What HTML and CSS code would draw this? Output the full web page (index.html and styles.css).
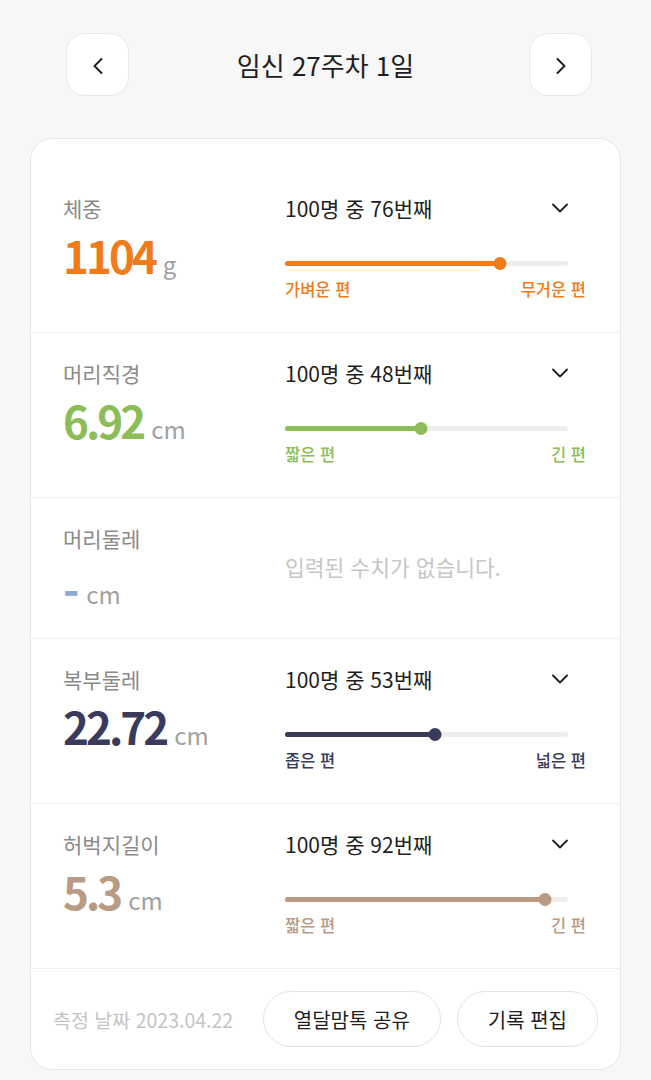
FILE: index.html
```html
<!DOCTYPE html>
<html lang="ko">
<head>
<meta charset="utf-8">
<title>임신 27주차 1일</title>
<link rel="stylesheet" href="styles.css">
</head>
<body>
<div class="page">
  <header class="nav">
    <button class="nav-btn" aria-label="이전">
      <svg width="12" height="16" viewBox="0 0 12 16"><polyline points="9.5,1 2.5,8 9.5,15" fill="none" stroke="#1e1e1e" stroke-width="1.9" stroke-linecap="round" stroke-linejoin="round"/></svg>
    </button>
    <h1 class="title">임신 27주차 1일</h1>
    <button class="nav-btn" aria-label="다음">
      <svg width="12" height="16" viewBox="0 0 12 16"><polyline points="2.5,1 9.5,8 2.5,15" fill="none" stroke="#1e1e1e" stroke-width="1.9" stroke-linecap="round" stroke-linejoin="round"/></svg>
    </button>
  </header>

  <section class="card">
    <div class="row">
      <div class="metric">
        <div class="label">체중</div>
        <div class="value"><span class="num c-orange">1104</span><span class="unit">g</span></div>
      </div>
      <div class="rank">
        <div class="rank-head"><span>100명 중 76번째</span>
          <svg class="chev" width="16" height="10" viewBox="0 0 16 10"><polyline points="1,1.5 8,8.5 15,1.5" fill="none" stroke="#1e1e1e" stroke-width="1.8" stroke-linecap="round" stroke-linejoin="round"/></svg>
        </div>
        <div class="slider"><div class="track"></div><div class="fill bg-orange" style="width:76%"></div><div class="dot bg-orange" style="left:76%"></div></div>
        <div class="ends c-orange"><span>가벼운 편</span><span>무거운 편</span></div>
      </div>
    </div>

    <div class="row">
      <div class="metric">
        <div class="label">머리직경</div>
        <div class="value"><span class="num c-green">6.92</span><span class="unit">cm</span></div>
      </div>
      <div class="rank">
        <div class="rank-head"><span>100명 중 48번째</span>
          <svg class="chev" width="16" height="10" viewBox="0 0 16 10"><polyline points="1,1.5 8,8.5 15,1.5" fill="none" stroke="#1e1e1e" stroke-width="1.8" stroke-linecap="round" stroke-linejoin="round"/></svg>
        </div>
        <div class="slider"><div class="track"></div><div class="fill bg-green" style="width:48%"></div><div class="dot bg-green" style="left:48%"></div></div>
        <div class="ends c-green"><span>짧은 편</span><span>긴 편</span></div>
      </div>
    </div>

    <div class="row">
      <div class="metric">
        <div class="label">머리둘레</div>
        <div class="value"><span class="num dash c-blue">-</span><span class="unit">cm</span></div>
      </div>
      <div class="empty">입력된 수치가 없습니다.</div>
    </div>

    <div class="row">
      <div class="metric">
        <div class="label">복부둘레</div>
        <div class="value"><span class="num c-navy">22.72</span><span class="unit">cm</span></div>
      </div>
      <div class="rank">
        <div class="rank-head"><span>100명 중 53번째</span>
          <svg class="chev" width="16" height="10" viewBox="0 0 16 10"><polyline points="1,1.5 8,8.5 15,1.5" fill="none" stroke="#1e1e1e" stroke-width="1.8" stroke-linecap="round" stroke-linejoin="round"/></svg>
        </div>
        <div class="slider"><div class="track"></div><div class="fill bg-navy" style="width:53%"></div><div class="dot bg-navy" style="left:53%"></div></div>
        <div class="ends c-navy"><span>좁은 편</span><span>넓은 편</span></div>
      </div>
    </div>

    <div class="row">
      <div class="metric">
        <div class="label">허벅지길이</div>
        <div class="value"><span class="num c-brown">5.3</span><span class="unit">cm</span></div>
      </div>
      <div class="rank">
        <div class="rank-head"><span>100명 중 92번째</span>
          <svg class="chev" width="16" height="10" viewBox="0 0 16 10"><polyline points="1,1.5 8,8.5 15,1.5" fill="none" stroke="#1e1e1e" stroke-width="1.8" stroke-linecap="round" stroke-linejoin="round"/></svg>
        </div>
        <div class="slider"><div class="track"></div><div class="fill bg-brown" style="width:92%"></div><div class="dot bg-brown" style="left:92%"></div></div>
        <div class="ends c-brown"><span>짧은 편</span><span>긴 편</span></div>
      </div>
    </div>

    <footer class="foot">
      <span class="date">측정 날짜 2023.04.22</span>
      <div class="actions">
        <button class="pill">열달맘톡 공유</button>
        <button class="pill">기록 편집</button>
      </div>
    </footer>
  </section>
</div>
</body>
</html>
```

FILE: styles.css
```css
* { box-sizing: border-box; }

html, body {
  margin: 0;
  padding: 0;
  background: #f7f7f7;
  font-family: "Noto Sans CJK KR", "Noto Sans", sans-serif;
  color: #222;
}

.page {
  width: 651px;
  height: 1080px;
  overflow: hidden;
}

.nav {
  display: grid;
  grid-template-columns: 63px 1fr 63px;
  align-items: center;
  padding: 33px 59px 0 66px;
  margin-bottom: 42px;
}

.nav-btn {
  width: 63px;
  height: 63px;
  border: 1px solid #e9e9e9;
  border-radius: 19px;
  background: #fff;
  display: flex;
  align-items: center;
  justify-content: center;
  padding: 2px 0 0;
  margin: 0;
}

.nav-btn svg { display: block; }

.title {
  margin: 0;
  padding-right: 7px;
  text-align: center;
  font-size: 26px;
  font-weight: 400;
  line-height: 38px;
  color: #1e1e1e;
}

.card {
  margin: 0 30px;
  background: #fff;
  border: 1px solid #e6e6e6;
  border-radius: 22px;
  padding-top: 29px;
}

.row {
  display: flex;
  padding: 26px 34px 31px 32px;
  border-bottom: 1px solid #efefef;
}

.metric {
  flex: 0 0 222px;
}

.label {
  font-size: 21px;
  line-height: 29px;
  color: #8a8a8a;
}

.value {
  margin-top: 10px;
  font-size: 44px;
  line-height: 44px;
  white-space: nowrap;
}

.num {
  font-weight: 700;
  letter-spacing: -3px;
}

.dash {
  line-height: 0;
  vertical-align: -6px;
  letter-spacing: 0;
  margin-right: -1px;
}

.unit {
  font-size: 24px;
  line-height: 24px;
  color: #a0a0a0;
  margin-left: 8px;
}

.rank {
  flex: 1;
  min-width: 0;
}

.rank-head {
  width: calc(100% - 18px);
  display: flex;
  justify-content: space-between;
  align-items: center;
  font-size: 21px;
  line-height: 29px;
  color: #1e1e1e;
}

.chev { display: block; margin-top: -1px; }

.slider {
  position: relative;
  width: calc(100% - 18px);
  height: 13px;
  margin-top: 34px;
}

.track {
  position: absolute;
  left: 0;
  right: 0;
  top: 4px;
  height: 5px;
  border-radius: 3px;
  background: #eeeeee;
}

.fill {
  position: absolute;
  left: 0;
  top: 4px;
  height: 5px;
  border-radius: 3px;
}

.dot {
  position: absolute;
  top: 0;
  width: 13px;
  height: 13px;
  border-radius: 50%;
  transform: translateX(-50%);
}

.ends {
  margin-top: 8px;
  display: flex;
  justify-content: space-between;
  font-size: 16.5px;
  font-weight: 500;
  line-height: 23px;
}

.empty {
  align-self: center;
  margin-top: 2px;
  font-size: 21.5px;
  color: #c6c6c6;
}

.c-orange { color: #f07b1a; }
.c-green { color: #8cbd58; }
.c-navy { color: #3a3a5c; }
.c-brown { color: #b99a83; }
.c-blue { color: #8fa9d4; }
.bg-orange { background: #f07b1a; }
.bg-green { background: #8cbd58; }
.bg-navy { background: #3a3a5c; }
.bg-brown { background: #b99a83; }

.foot {
  display: flex;
  align-items: center;
  padding: 22px 22px 22px 22px;
}

.date {
  font-size: 19.5px;
  color: #c4c4c4;
}

.actions {
  margin-left: auto;
  display: flex;
  gap: 16px;
}

.pill {
  height: 56px;
  padding: 0 30px;
  border: 1.5px solid #e3e3e3;
  border-radius: 28px;
  background: #fff;
  font-family: "Noto Sans CJK KR", "Noto Sans", sans-serif;
  font-size: 20px;
  color: #1e1e1e;
}
```
